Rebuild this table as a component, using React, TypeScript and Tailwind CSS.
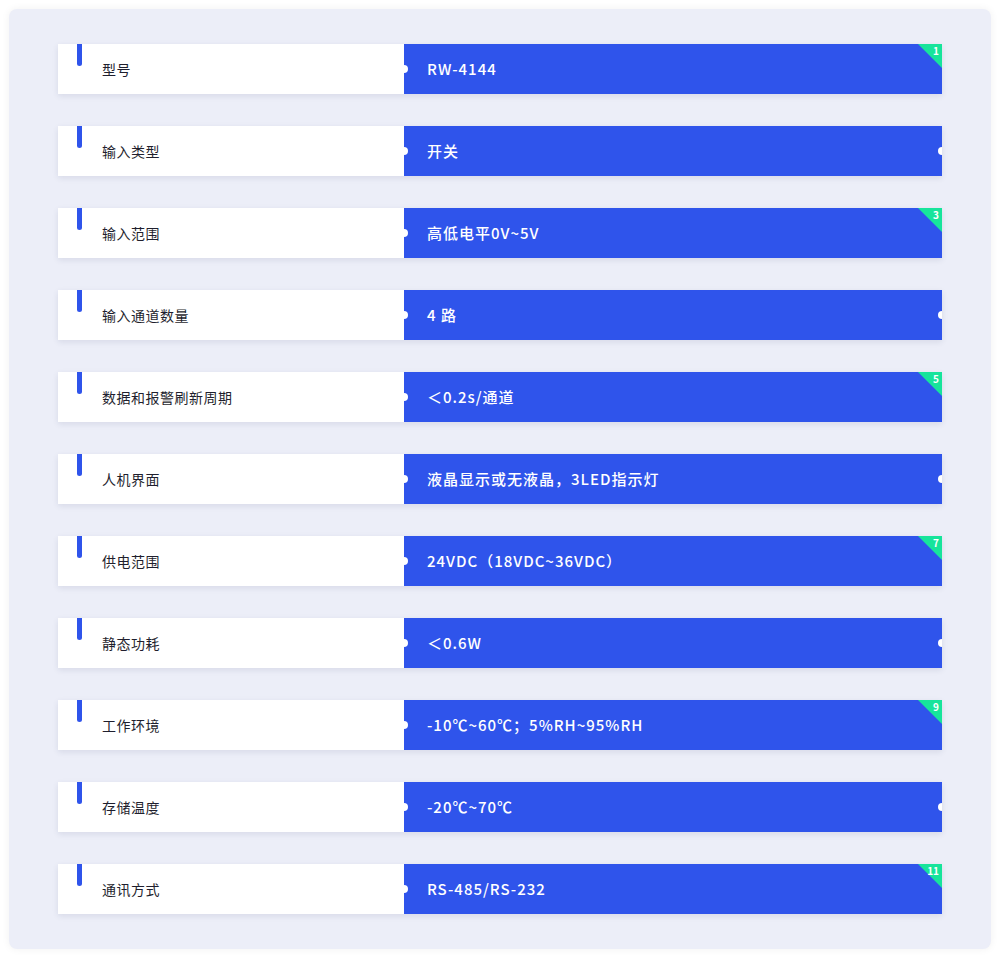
import React from "react";

const rows: [string, string][] = [
  ["型号", "RW-4144"],
  ["输入类型", "开关"],
  ["输入范围", "高低电平0V~5V"],
  ["输入通道数量", "4 路"],
  ["数据和报警刷新周期", "＜0.2s/通道"],
  ["人机界面", "液晶显示或无液晶，3LED指示灯"],
  ["供电范围", "24VDC（18VDC~36VDC）"],
  ["静态功耗", "＜0.6W"],
  ["工作环境", "-10℃~60℃；5%RH~95%RH"],
  ["存储温度", "-20℃~70℃"],
  ["通讯方式", "RS-485/RS-232"],
];

export default function App() {
  return (
    <div
      className="w-[1000px] h-[958px] bg-white p-[9px]"
      style={{ fontFamily: '"Noto Sans CJK SC", "Noto Sans", sans-serif' }}
    >
      <div className="w-[982px] h-[940px] bg-[#eceef8] rounded-[8px] shadow-[0_0_8px_rgba(0,0,0,0.06)] pt-[35px] pl-[49px] flex flex-col gap-[32px]">
        {rows.map(([label, value], i) => {
          const odd = i % 2 === 0;
          return (
            <div
              key={i}
              className="relative w-[884px] h-[50px] flex shadow-[0_2px_6px_rgba(30,40,90,0.10)]"
            >
              <div className="relative w-[346px] h-full bg-white flex items-center">
                <div className="absolute left-[19px] top-0 w-[5px] h-[22px] bg-[#2f54eb] rounded-b-full" />
                <span className="ml-[44px] text-[14px] leading-[20px] text-[#1f1f2e] tracking-[0.5px] -mt-[1px]">
                  {label}
                </span>
              </div>
              <div className="relative flex-1 h-full bg-[#2f54eb] flex items-center overflow-hidden">
                <div className="absolute left-[-4px] top-[21px] w-[8px] h-[8px] rounded-full bg-white" />
                <span className="ml-[23px] text-[15px] leading-[20px] font-medium text-white tracking-[1px] -mt-[1px]">
                  {value}
                </span>
                {odd ? (
                  <>
                    <div className="absolute right-0 top-0 w-0 h-0 border-t-[24px] border-l-[24px] border-t-[#17e49b] border-l-transparent" />
                    <span className="absolute right-[3px] top-[1px] text-[10px] leading-[12px] font-bold text-white">
                      {i + 1}
                    </span>
                  </>
                ) : (
                  <div className="absolute right-[-4px] top-[21px] w-[8px] h-[8px] rounded-full bg-white" />
                )}
              </div>
            </div>
          );
        })}
      </div>
    </div>
  );
}
